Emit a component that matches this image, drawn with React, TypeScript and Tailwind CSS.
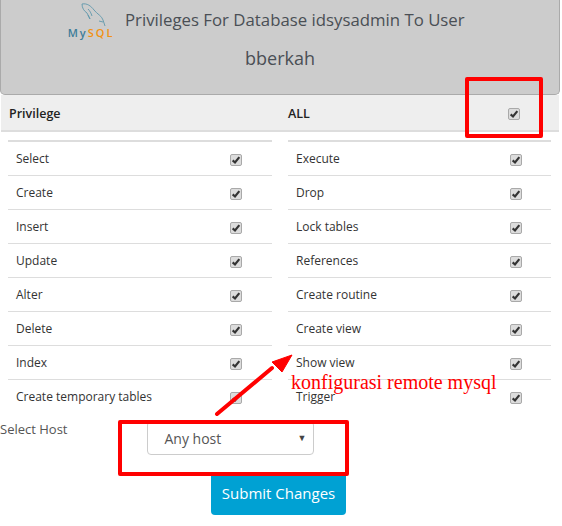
const leftRows = ["Select", "Create", "Insert", "Update", "Alter", "Delete", "Index", "Create temporary tables"];
const rightRows = ["Execute", "Drop", "Lock tables", "References", "Create routine", "Create view", "Show view", "Trigger"];

function Check() {
  return (
    <span className="mt-[2px] flex h-[12px] w-[12px] items-center justify-center rounded-[2px] border border-[#a9a9a9] bg-[#dcdcdc]">
      <svg viewBox="0 0 12 12" className="h-[10px] w-[10px]" fill="none" stroke="#333" strokeWidth={2.6}>
        <path d="M2 6.5 L4.8 9 L10 2.5" />
      </svg>
    </span>
  );
}

function PrivList({ rows, className, rowPad }: { rows: string[]; className: string; rowPad: string }) {
  return (
    <div className={`border-t-[2px] border-[#ddd] ${className}`}>
      {rows.map((r, i) => (
        <div key={r} className={`flex h-[34px] items-center justify-between pl-[8px] ${rowPad} ${i < rows.length - 1 ? "border-b border-[#ddd]" : ""}`}>
          <span className="text-[12px] text-[#333]">{r}</span>
          <Check />
        </div>
      ))}
    </div>
  );
}

function MysqlLogo() {
  return (
    <div className="flex w-[50px] flex-col items-center">
      <svg viewBox="0 0 26 24" className="ml-[6px] h-[24px] w-[26px]" fill="none" stroke="#5f97ab" strokeWidth={0.9}>
        <path d="M1 1 C6 0 10 3 13 7 C16 11 21 13 22 17 L24 23 M22 19 L18 18 M1 1 C1 5 3 8 6 10 L9 16 L7 12 M7 6 C9 8 10 10 11 13" />
      </svg>
      <div className="mt-[1px] flex text-[11px] leading-[10px] font-semibold tracking-[2px] whitespace-nowrap">
        <span className="text-[#3d7d99]">My</span>
        <span className="text-[#f29111]">SQL</span>
      </div>
    </div>
  );
}

export default function App() {
  return (
    <div className="relative h-[526px] w-[562px] overflow-hidden bg-white font-['Open_Sans',sans-serif]">
      {/* Header */}
      <div className="mr-[2px] flex h-[95px] rounded-b-[5px] border border-t-0 border-[#aaa] bg-[#ccc]">
        <div className="ml-[65px] mt-[3px]">
          <MysqlLogo />
        </div>
        <h1 className="ml-[9px] font-normal text-[#4a4f55]">
          <span className="block text-[16.8px] leading-[39px] whitespace-nowrap">Privileges For Database idsysadmin To User</span>
          <span className="block pl-[120px] text-[18px] leading-[39px]">bberkah</span>
        </h1>
      </div>

      {/* Table head */}
      <div className="mr-[3px] ml-[1px] flex h-[37px] items-center border-b-[2px] border-[#ddd] bg-[#eee] text-[12.5px] font-semibold text-[#222]">
        <span className="w-[287px] pt-[3px] pl-[8px]">Privilege</span>
        <span className="flex-1 pt-[3px]">ALL</span>
        <span className="mr-[39px]"><Check /></span>
      </div>

      {/* Privileges */}
      <div className="mt-[8px] flex pl-[8px]">
        <PrivList rows={leftRows} className="w-[264px]" rowPad="pr-[30px]" />
        <PrivList rows={rightRows} className="ml-[16px] w-[263px]" rowPad="pr-[29px]" />
      </div>

      {/* Host */}
      <div className="flex h-[62px]">
        <span className="mt-[6px] text-[13px] text-[#555]">Select Host</span>
        <div className="ml-[80px] mt-[7px] flex h-[34px] w-[167px] items-center justify-between rounded-[4px] border border-[#ccc] bg-white pl-[16px] pr-[7px] text-[14px] text-[#555]">
          <span>Any host</span>
          <span className="text-[9px] text-[#444]">▼</span>
        </div>
      </div>
      <button className="ml-[211px] block h-[39px] w-[135px] rounded-b-[4px] bg-[#00a1d3] pb-[4px] text-[15px] text-white">Submit Changes</button>

      {/* Annotations */}
      <div className="absolute top-[77px] left-[465px] h-[61px] w-[78px] rounded-[2px] border-[4px] border-[#ff0000]" />
      <div className="absolute top-[420px] left-[118px] h-[56px] w-[231px] rounded-[2px] border-[4px] border-[#ff0000]" />
      <svg className="absolute top-[350px] left-[210px] h-[70px] w-[85px]" viewBox="0 0 85 70">
        <path d="M7 64 L62 18" stroke="#ff0000" strokeWidth={4} strokeLinecap="round" />
        <path d="M82 5 L62 12 L72 22 Z" fill="#ff0000" stroke="#ff0000" strokeWidth={1} />
      </svg>
      <span className="absolute top-[371px] left-[291px] font-['Liberation_Serif',serif] text-[20px] leading-[22px] whitespace-nowrap text-[#ff0000]">konfigurasi remote mysql</span>
    </div>
  );
}
